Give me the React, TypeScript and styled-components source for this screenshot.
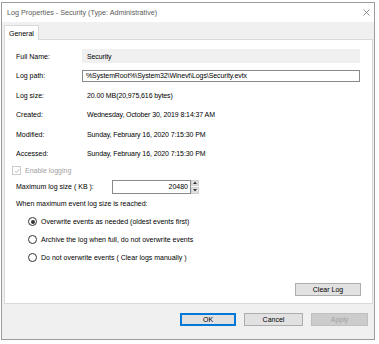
import React from 'react';
import styled, { createGlobalStyle } from 'styled-components';

const GlobalStyle = createGlobalStyle`
  html, body {
    margin: 0;
    padding: 0;
    background: #ffffff;
  }
  body {
    font-family: "Liberation Sans", Arial, sans-serif;
    font-size: 7px;
    color: #000;
  }
`;

const Window = styled.div`
  margin: 2px 0 0 1px;
  width: 374px;
  height: 338px;
  box-sizing: border-box;
  border: 1px solid #9b9b9b;
  display: flex;
  flex-direction: column;
  background: #f0f0f0;
`;

const TitleBar = styled.div`
  height: 19px;
  flex-shrink: 0;
  background: #ffffff;
  display: flex;
  align-items: center;
  justify-content: space-between;
  padding: 0 4px 0 5px;
  color: #5a5a5a;
  font-size: 7.2px;
`;

const CloseButton = styled.div`
  width: 8px;
  height: 8px;
  display: flex;
  align-items: center;
  justify-content: center;
`;

const Body = styled.div`
  flex: 1;
  display: flex;
  flex-direction: column;
  padding: 3px 1px 0 2px;
`;

const TabStrip = styled.div`
  display: flex;
  height: 15px;
  position: relative;
  z-index: 1;
`;

const Tab = styled.div<{ $active?: boolean }>`
  padding: 0 4px;
  height: 15px;
  box-sizing: border-box;
  display: flex;
  align-items: center;
  background: ${p => (p.$active ? '#ffffff' : '#f0f0f0')};
  border: 1px solid #d9d9d9;
  border-bottom: none;
`;

const Panel = styled.div`
  height: 265px;
  margin-top: -1px;
  box-sizing: border-box;
  background: #ffffff;
  border: 1px solid #d9d9d9;
  padding: 9px 11px 0 11px;
  display: flex;
  flex-direction: column;
`;

const InfoGrid = styled.div`
  display: grid;
  grid-template-columns: 66px 278px;
  align-items: center;
  row-gap: 5.5px;
`;

const Label = styled.div`
  height: 14px;
  display: flex;
  align-items: center;
`;

const Value = styled.div<{ $shaded?: boolean; $boxed?: boolean }>`
  height: ${p => (p.$boxed ? 12 : 14)}px;
  box-sizing: border-box;
  display: flex;
  align-items: center;
  padding-left: ${p => (p.$boxed ? 3 : 5)}px;
  background: ${p => (p.$shaded ? '#f0f0f0' : '#ffffff')};
  border: ${p => (p.$boxed ? '1px solid #8a8a8a' : 'none')};
  margin: ${p => (p.$boxed ? '1px 0' : '0')};
  letter-spacing: -0.1px;
`;

const LoggingSection = styled.div`
  margin-top: 4px;
  display: flex;
  flex-direction: column;
`;

const CheckRow = styled.div`
  display: flex;
  align-items: center;
  gap: 4px;
  margin-left: -4px;
  color: #a0a0a0;
  height: 12px;
`;

const CheckBox = styled.div`
  width: 7px;
  height: 7px;
  border: 1px solid #cccccc;
  display: flex;
  align-items: center;
  justify-content: center;
`;

const SizeRow = styled.div`
  display: flex;
  align-items: center;
  margin-top: 3px;
  height: 14px;
`;

const SizeLabel = styled.div`
  width: 96px;
`;

const NumberInput = styled.div`
  width: 79px;
  height: 14px;
  box-sizing: border-box;
  border: 1px solid #8a8a8a;
  display: flex;
  align-items: center;
  justify-content: flex-end;
  padding-right: 2px;
`;

const Spinner = styled.div`
  width: 8px;
  height: 14px;
  display: flex;
  flex-direction: column;
  gap: 1px;
`;

const SpinPart = styled.div`
  flex: 1;
  background: #e1e1e1;
  border: 1px solid #d0d0d0;
  display: flex;
  align-items: center;
  justify-content: center;
`;

const Caption = styled.div`
  margin-top: 4px;
  height: 12px;
  display: flex;
  align-items: center;
`;

const RadioList = styled.div`
  display: flex;
  flex-direction: column;
  gap: 6px;
  margin-top: 6px;
  padding-left: 12px;
`;

const RadioRow = styled.div`
  display: flex;
  align-items: center;
  gap: 4px;
  height: 12px;
`;

const RadioCircle = styled.div<{ $checked?: boolean }>`
  width: 9px;
  height: 9px;
  box-sizing: border-box;
  border-radius: 50%;
  border: 1px solid #333333;
  display: flex;
  align-items: center;
  justify-content: center;

  &::after {
    content: '';
    width: 4px;
    height: 4px;
    border-radius: 50%;
    background: ${p => (p.$checked ? '#333333' : 'transparent')};
  }
`;

const ClearRow = styled.div`
  margin-top: auto;
  margin-bottom: 7px;
  display: flex;
  justify-content: flex-end;
  padding-right: 0;
`;

const Button = styled.div<{ $primary?: boolean; $disabled?: boolean; $w?: number }>`
  width: ${p => p.$w ?? 57}px;
  height: 13px;
  box-sizing: border-box;
  display: flex;
  align-items: center;
  justify-content: center;
  background: ${p => (p.$disabled ? '#cccccc' : '#e1e1e1')};
  color: ${p => (p.$disabled ? '#a0a0a0' : '#000')};
  border: 1px solid ${p => (p.$primary ? '#0078d7' : p.$disabled ? '#bfbfbf' : '#adadad')};
  box-shadow: ${p => (p.$primary ? 'inset 0 0 0 1px #0078d7' : 'none')};
`;

const Footer = styled.div`
  display: flex;
  justify-content: flex-end;
  gap: 8px;
  padding: 9px 5px 0 0;
`;

const rows = [
  { label: 'Full Name:', value: 'Security', shaded: true },
  { label: 'Log path:', value: '%SystemRoot%\\System32\\Winevt\\Logs\\Security.evtx', boxed: true },
  { label: 'Log size:', value: '20.00 MB(20,975,616 bytes)' },
  { label: 'Created:', value: 'Wednesday, October 30, 2019 8:14:37 AM' },
  { label: 'Modified:', value: 'Sunday, February 16, 2020 7:15:30 PM' },
  { label: 'Accessed:', value: 'Sunday, February 16, 2020 7:15:30 PM' },
];

const radios = [
  { text: 'Overwrite events as needed (oldest events first)', checked: true },
  { text: 'Archive the log when full, do not overwrite events' },
  { text: 'Do not overwrite events ( Clear logs manually )' },
];

export default function App() {
  return (
    <>
      <GlobalStyle />
      <Window>
        <TitleBar>
          <span>Log Properties - Security (Type: Administrative)</span>
          <CloseButton>
            <svg width="7" height="7" viewBox="0 0 7 7">
              <path d="M0.5 0.5 L6.5 6.5 M6.5 0.5 L0.5 6.5" stroke="#7a7a7a" strokeWidth="0.8" />
            </svg>
          </CloseButton>
        </TitleBar>
        <Body>
          <TabStrip>
            <Tab $active>General</Tab>
          </TabStrip>
          <Panel>
            <InfoGrid>
              {rows.map(r => (
                <React.Fragment key={r.label}>
                  <Label>{r.label}</Label>
                  <Value $shaded={r.shaded} $boxed={r.boxed}>{r.value}</Value>
                </React.Fragment>
              ))}
            </InfoGrid>
            <LoggingSection>
              <CheckRow>
                <CheckBox>
                  <svg width="6" height="6" viewBox="0 0 6 6">
                    <path d="M0.8 3 L2.4 4.6 L5.3 1.2" stroke="#b0b0b0" strokeWidth="0.8" fill="none" />
                  </svg>
                </CheckBox>
                Enable logging
              </CheckRow>
              <SizeRow>
                <SizeLabel>Maximum log size ( KB ):</SizeLabel>
                <NumberInput>20480</NumberInput>
                <Spinner>
                  <SpinPart>
                    <svg width="4" height="3" viewBox="0 0 4 3"><path d="M0 3 L2 0.5 L4 3 Z" fill="#333" /></svg>
                  </SpinPart>
                  <SpinPart>
                    <svg width="4" height="3" viewBox="0 0 4 3"><path d="M0 0 L2 2.5 L4 0 Z" fill="#333" /></svg>
                  </SpinPart>
                </Spinner>
              </SizeRow>
              <Caption>When maximum event log size is reached:</Caption>
              <RadioList>
                {radios.map(r => (
                  <RadioRow key={r.text}>
                    <RadioCircle $checked={r.checked} />
                    {r.text}
                  </RadioRow>
                ))}
              </RadioList>
            </LoggingSection>
            <ClearRow>
              <Button $w={66}>Clear Log</Button>
            </ClearRow>
          </Panel>
          <Footer>
            <Button $primary $w={56}>OK</Button>
            <Button $w={59}>Cancel</Button>
            <Button $disabled $w={57}>Apply</Button>
          </Footer>
        </Body>
      </Window>
    </>
  );
}
